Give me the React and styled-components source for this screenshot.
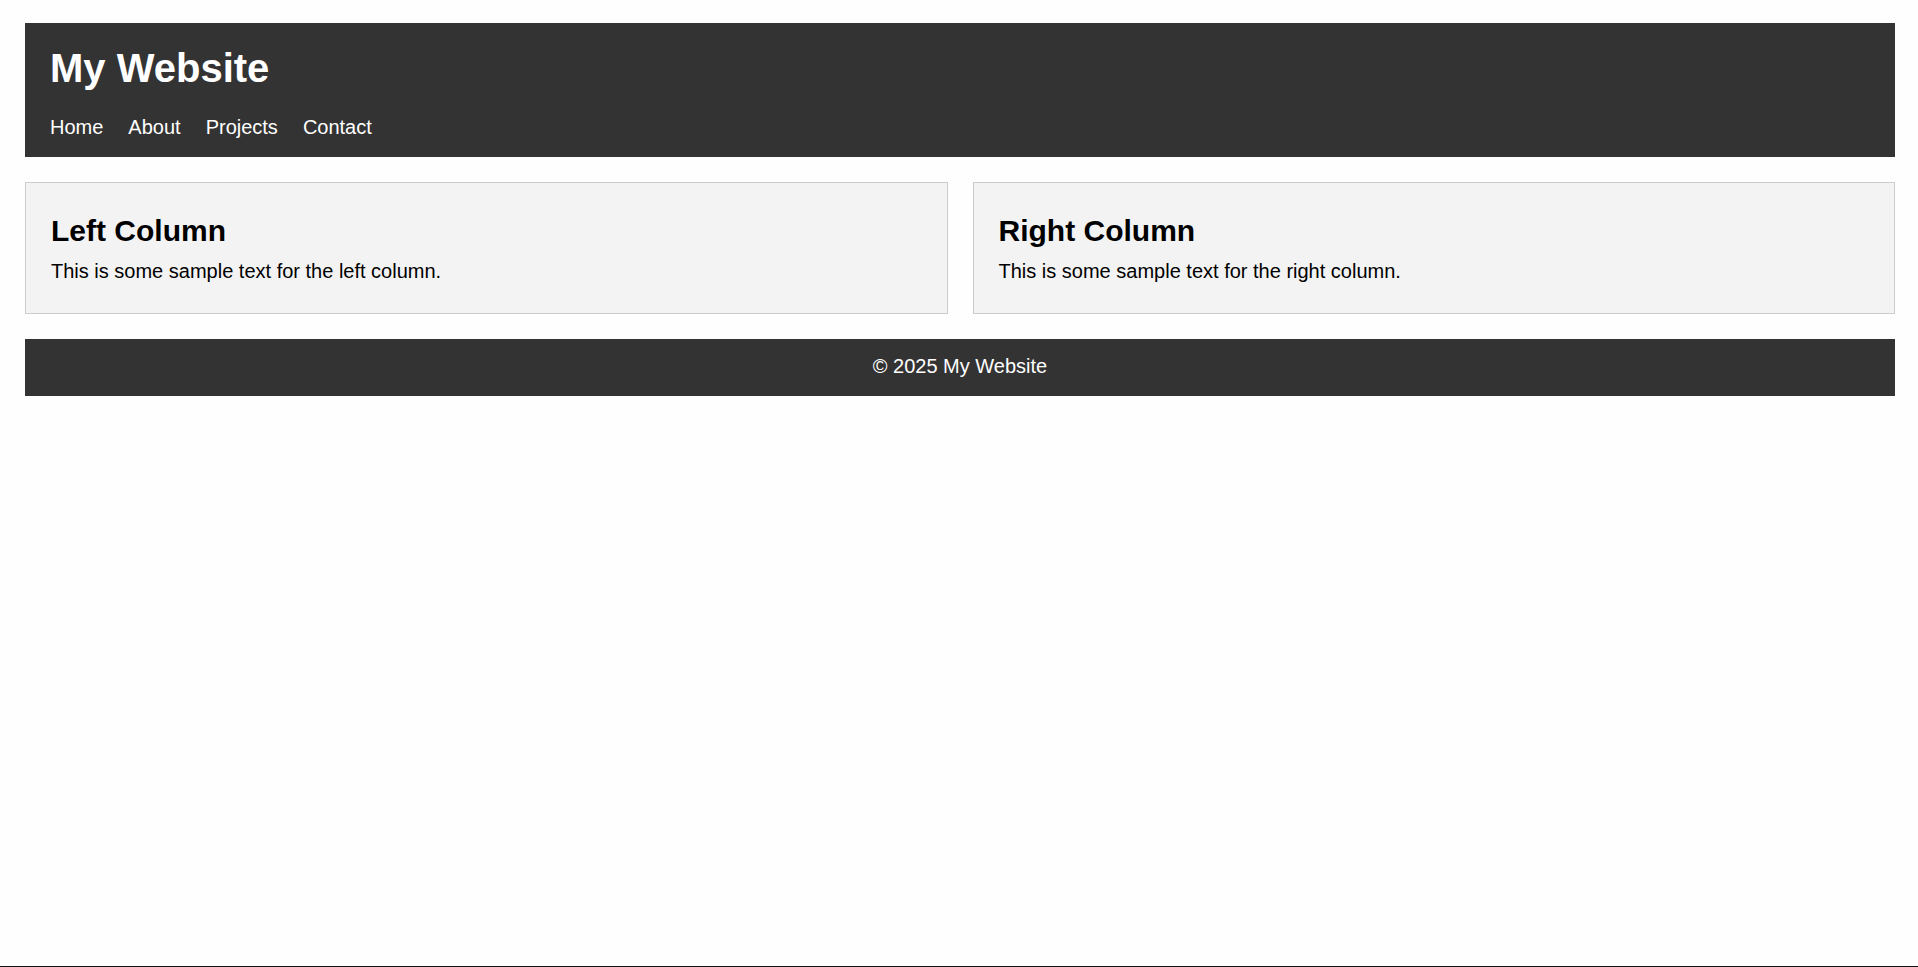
import React from "react";
import styled, { createGlobalStyle } from "styled-components";

const GlobalStyle = createGlobalStyle`
  html, body {
    margin: 0;
    padding: 0;
    background: #fefefe;
  }
  body {
    font-family: "Liberation Sans", Arial, sans-serif;
    color: #000;
  }
  * { box-sizing: border-box; }
`;

const Page = styled.div`
  min-height: 100vh;
  padding: 23px 23px 0 25px;
  display: flex;
  flex-direction: column;
  gap: 25px;
  border-bottom: 1px solid #111;
`;

const Header = styled.header`
  background: #333333;
  color: #ffffff;
  padding: 22px 25px 18px;
`;

const SiteTitle = styled.h1`
  margin: 0 0 25px;
  font-size: 40px;
  line-height: 46px;
  font-weight: 700;
`;

const Nav = styled.nav`
  display: flex;
  gap: 25px;
`;

const NavLink = styled.a`
  color: #ffffff;
  text-decoration: none;
  font-size: 20px;
  line-height: 23px;
`;

const Columns = styled.main`
  display: grid;
  grid-template-columns: 1fr 1fr;
  gap: 25px;
`;

const Card = styled.section`
  background: #f3f3f3;
  border: 1px solid #cccccc;
  padding: 30.5px 25px 29.7px;
`;

const CardTitle = styled.h2`
  margin: 0 0 12px;
  font-size: 30px;
  line-height: 34.5px;
  font-weight: 700;
`;

const CardText = styled.p`
  margin: 0;
  font-size: 20px;
  line-height: 23px;
`;

const Footer = styled.footer`
  background: #333333;
  color: #ffffff;
  text-align: center;
  padding: 16.75px 25px 17.25px;
  font-size: 20px;
  line-height: 23px;
`;

const links = ["Home", "About", "Projects", "Contact"];

const columns = [
  { title: "Left Column", text: "This is some sample text for the left column." },
  { title: "Right Column", text: "This is some sample text for the right column." },
];

export default function App() {
  return (
    <>
      <GlobalStyle />
      <Page>
        <Header>
          <SiteTitle>My Website</SiteTitle>
          <Nav>
            {links.map((l) => (
              <NavLink key={l} href="#">
                {l}
              </NavLink>
            ))}
          </Nav>
        </Header>
        <Columns>
          {columns.map((c) => (
            <Card key={c.title}>
              <CardTitle>{c.title}</CardTitle>
              <CardText>{c.text}</CardText>
            </Card>
          ))}
        </Columns>
        <Footer>© 2025 My Website</Footer>
      </Page>
    </>
  );
}
